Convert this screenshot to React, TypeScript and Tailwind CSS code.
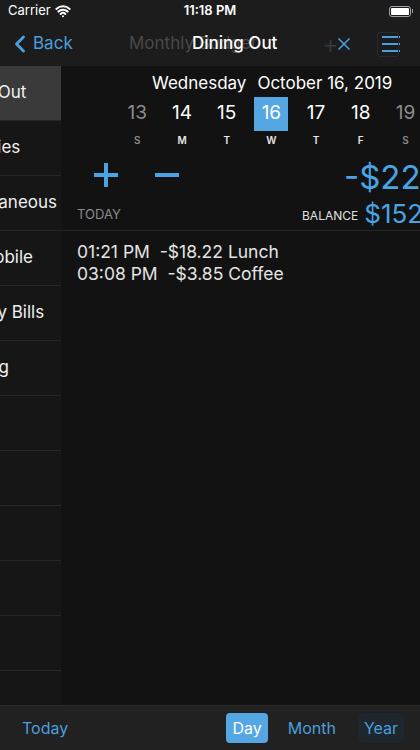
import { ChevronLeft, Wifi, X } from "lucide-react";

const categories = [
  "Dining Out",
  "Groceries",
  "Miscellaneous",
  "Automobile",
  "Monthly Bills",
  "Clothing",
  "",
  "",
  "",
  "",
  "",
];

const days = [
  { n: "13", d: "S", dim: true },
  { n: "14", d: "M" },
  { n: "15", d: "T" },
  { n: "16", d: "W", sel: true },
  { n: "17", d: "T" },
  { n: "18", d: "F" },
  { n: "19", d: "S", dim: true },
];

export default function App() {
  return (
    <div
      className="w-[420px] h-[750px] flex flex-col bg-[#121212] text-white overflow-hidden"
      style={{ fontFamily: "Inter, 'Liberation Sans', sans-serif" }}
    >
      {/* status + nav */}
      <header className="bg-[#1c1c1c] h-[66px] shrink-0 flex flex-col">
        <div className="h-[22px] flex items-center justify-between px-2 relative">
          <div className="flex items-center gap-1 text-[13px]">
            Carrier
            <Wifi className="w-4 h-4" strokeWidth={3} />
          </div>
          <div className="absolute left-0 right-0 text-center text-[13px] font-semibold">
            11:18 PM
          </div>
          <div className="flex items-center -mr-[1px]">
            <div className="w-[22px] h-[11px] rounded-[3px] border border-gray-400 p-[1px]">
              <div className="w-full h-full bg-white rounded-[1px]" />
            </div>
            <div className="w-[1.5px] h-[4px] bg-gray-400 ml-[1px]" />
          </div>
        </div>
        <div className="flex-1 flex items-center relative">
          <div className="flex items-center text-[#4a9fdc] text-[17px] ml-[6px]">
            <ChevronLeft className="w-[28px] h-[28px] -mr-[1px]" strokeWidth={2.5} />
            Back
          </div>
          <div className="absolute left-[129px] text-[17px] text-[#4a4a4a]">
            Monthly Budget
          </div>
          <div className="absolute left-[192px] text-[17px] font-medium text-white">
            Dining Out
          </div>
          <div className="ml-auto flex items-center relative mr-[20px]">
            <span className="absolute left-[-12px] text-[26px] font-light text-[#353b42] leading-none">
              +
            </span>
            <X className="w-[20px] h-[20px] text-[#4a9fdc]" strokeWidth={2} />
            <div className="ml-[28px] relative w-[18px] h-[18px] flex flex-col justify-between py-[1px]">
              <div className="absolute -left-[5px] -top-[3px] w-[22px] h-[25px] border border-[#252b31] rounded-[3px]" />
              <div className="h-[2px] bg-[#4a9fdc]" />
              <div className="h-[2px] bg-[#4a9fdc]" />
              <div className="h-[2px] bg-[#4a9fdc]" />
            </div>
          </div>
        </div>
      </header>

      <div className="flex-1 flex min-h-0">
        {/* sidebar */}
        <aside className="w-[61px] shrink-0 bg-[#161616] overflow-hidden">
          {categories.map((c, i) => (
            <div
              key={i}
              className={`h-[55px] flex items-center border-b border-[#262626] ${
                i === 0 ? "bg-[#3a3a3a]" : ""
              }`}
            >
              <span className="-ml-[58px] whitespace-nowrap text-[17px] text-[#f0f0f0]">
                {c}
              </span>
            </div>
          ))}
        </aside>

        {/* main */}
        <main className="flex-1 overflow-hidden flex flex-col">
          <div className="pt-[5px] flex gap-[11px] text-[17px] ml-[91px]">
            <span>Wednesday</span>
            <span>October 16, 2019</span>
          </div>
          <div className="flex ml-[54px]">
            {days.map((d) => (
              <div key={d.n} className="w-[44.7px] shrink-0 flex flex-col items-center">
                <div
                  className={`w-[34px] h-[34px] flex items-center justify-center text-[19px] ${
                    d.sel ? "bg-[#55a7e4]" : ""
                  } ${d.dim ? "text-[#8c8c8c]" : "text-white"}`}
                >
                  {d.n}
                </div>
                <div
                  className={`text-[10px] font-semibold mt-[2px] ${
                    d.dim ? "text-[#8c8c8c]" : "text-[#e8e8e8]"
                  }`}
                >
                  {d.d}
                </div>
              </div>
            ))}
          </div>

          <div className="flex items-start mt-[13px] h-[40px] relative">
            <svg className="ml-[32px] mt-[1px]" width="26" height="26" viewBox="0 0 26 26">
              <path d="M13 1v24M1 13h24" stroke="#4aa3e2" strokeWidth="4" />
            </svg>
            <svg className="ml-[36px] mt-[1px]" width="24" height="26" viewBox="0 0 24 26">
              <path d="M0 13h24" stroke="#4aa3e2" strokeWidth="4" />
            </svg>
            <div className="absolute left-[283px] top-[0px] text-[33px] text-[#4aa3e2] whitespace-nowrap leading-none">
              -$22.07
            </div>
          </div>
          <div className="flex items-end h-[28px] relative">
            <span className="ml-[16px] mb-[4px] text-[13px] text-[#8a8a8a]">TODAY</span>
            <div className="absolute left-[241px] bottom-[2px] flex items-end whitespace-nowrap">
              <span className="text-[12px] text-[#e0e0e0] mb-[2px]">BALANCE</span>
              <span className="ml-[6px] text-[26px] text-[#4aa3e2] leading-none">$152.93</span>
            </div>
          </div>
          <div className="border-b border-[#262626] mt-[1px]" />

          <div className="pl-[16px] pt-[10px] text-[17.5px] text-[#e4e4e4] leading-[22px]">
            <div className="whitespace-pre">01:21 PM  -$18.22 Lunch</div>
            <div className="whitespace-pre">03:08 PM  -$3.85 Coffee</div>
          </div>
        </main>
      </div>

      {/* toolbar */}
      <footer className="h-[45px] shrink-0 bg-[#212121] border-t border-[#2a2a2a] flex items-center text-[16px] text-[#4a9fdc]">
        <span className="ml-[22px]">Today</span>
        <div className="ml-auto flex items-center mr-[16px]">
          <span className="px-[6px] h-[30px] flex items-center rounded-[4px] bg-[#55a7e4] text-white">
            Day
          </span>
          <span className="ml-[20px]">Month</span>
          <span className="ml-[22px] px-[6px] h-[30px] flex items-center rounded-[4px] bg-[#1e272e]">
            Year
          </span>
        </div>
      </footer>
    </div>
  );
}
